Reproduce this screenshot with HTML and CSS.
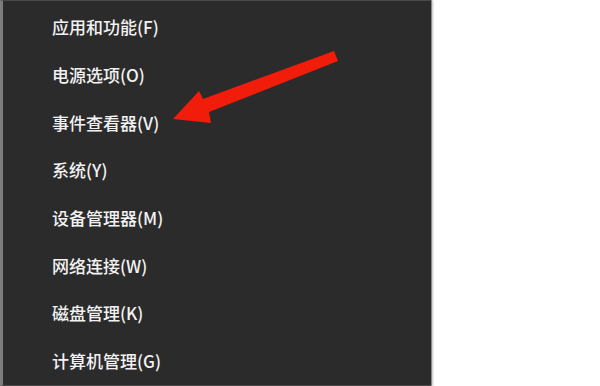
FILE: index.html
```html
<!DOCTYPE html>
<html lang="zh-CN">
<head>
<meta charset="utf-8">
<link rel="stylesheet" href="styles.css">
</head>
<body>
<div class="stage">
  <div class="menu">
    <div class="item">应用和功能(F)</div>
    <div class="item">电源选项(O)</div>
    <div class="item">事件查看器(V)</div>
    <div class="item">系统(Y)</div>
    <div class="item">设备管理器(M)</div>
    <div class="item">网络连接(W)</div>
    <div class="item">磁盘管理(K)</div>
    <div class="item">计算机管理(G)</div>
  </div>
  <svg class="arrow" width="600" height="386" viewBox="0 0 600 386">
    <polygon fill="#f21c0b" points="334,51 338,61 209,112 211,123 173,119 199,91 203,99"/>
  </svg>
</div>
</body>
</html>
```
FILE: styles.css
```css
html, body {
  margin: 0;
  padding: 0;
  background: #ffffff;
}
.stage {
  position: relative;
  width: 600px;
  height: 386px;
  overflow: hidden;
}
.menu {
  box-sizing: border-box;
  width: 431px;
  height: 386px;
  background: #2b2b2b;
  border-left: 3px solid #7d7d7d;
  border-top: 1px solid #4a4a4a;
  border-bottom: 1px solid #4a4a4a;
  box-shadow: 1px 0 0 #8a8a8a, 2px 0 2px rgba(0,0,0,0.25);
  padding: 2px 0 0 49px;
  display: flex;
  flex-direction: column;
}
.item {
  height: 47.7px;
  display: flex;
  align-items: center;
  color: #f2f2f2;
  font-family: "Noto Sans CJK SC", "Noto Sans", sans-serif;
  font-size: 17px;
  font-weight: 500;
}
.arrow {
  position: absolute;
  left: 0;
  top: 0;
}
```
